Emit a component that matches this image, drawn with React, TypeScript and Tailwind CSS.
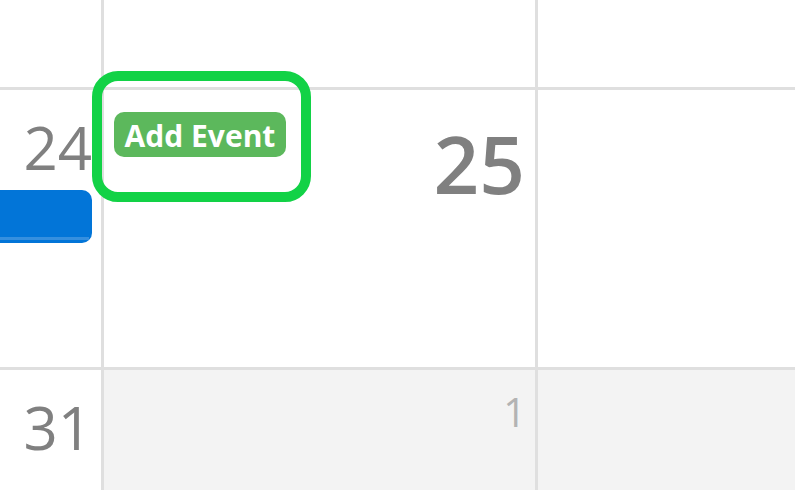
import type { ReactNode } from "react";

function Cell({ muted = false, children }: { muted?: boolean; children?: ReactNode }) {
  return (
    <td
      className={`border-r-3 border-b-3 border-[#dfdfdf] p-0 align-top last:border-r-0 ${
        muted ? "bg-[#f3f3f3]" : "bg-white"
      }`}
    >
      {children}
    </td>
  );
}

function DayNumber({ children }: { children: ReactNode }) {
  return (
    <time className="block pt-[26px] pr-[9px] text-right text-[60px] leading-[62px] font-normal">
      {children}
    </time>
  );
}

export default function App() {
  return (
    <main className="h-screen overflow-hidden bg-white font-['Open_Sans','Noto_Sans',sans-serif] text-[#808080]">
      <table className="w-full table-fixed border-separate border-spacing-0">
        <colgroup>
          <col className="w-[104px]" />
          <col className="w-[434px]" />
          <col />
        </colgroup>
        <tbody>
          <tr className="h-[90px]">
            <Cell />
            <Cell />
            <Cell />
          </tr>
          <tr className="h-[280px]">
            <Cell>
              <DayNumber>24</DayNumber>
              <div className="mt-3 mr-[9px] flex h-[53px] flex-col justify-end rounded-r-[10px] bg-[#0275d8] pr-[3px] pb-[3px]">
                <div className="h-[3px] bg-[#358fdf]" />
              </div>
            </Cell>
            <Cell>
              <div className="relative flex items-start justify-between pt-[22px] pr-[10px] pl-[10px]">
                <button
                  type="button"
                  className="h-[45px] w-[172px] rounded-[10px] bg-[#5cb85c] pt-[3px] text-center text-[30px] leading-[42px] font-bold whitespace-nowrap text-white"
                >
                  Add Event
                </button>
                <div className="pointer-events-none absolute -top-[19px] -left-3 h-[131px] w-[219px] rounded-[26px] border-10 border-[#12d246]" />
                <time className="pt-[10px] text-[80px] leading-[82px] font-semibold">25</time>
              </div>
            </Cell>
            <Cell />
          </tr>
          <tr className="h-[280px]">
            <Cell>
              <DayNumber>31</DayNumber>
            </Cell>
            <Cell muted>
              <time className="block pt-[22px] pr-[9px] text-right text-[40px] leading-[40px] font-normal text-[#b3b3b3]">
                1
              </time>
            </Cell>
            <Cell muted />
          </tr>
        </tbody>
      </table>
    </main>
  );
}
